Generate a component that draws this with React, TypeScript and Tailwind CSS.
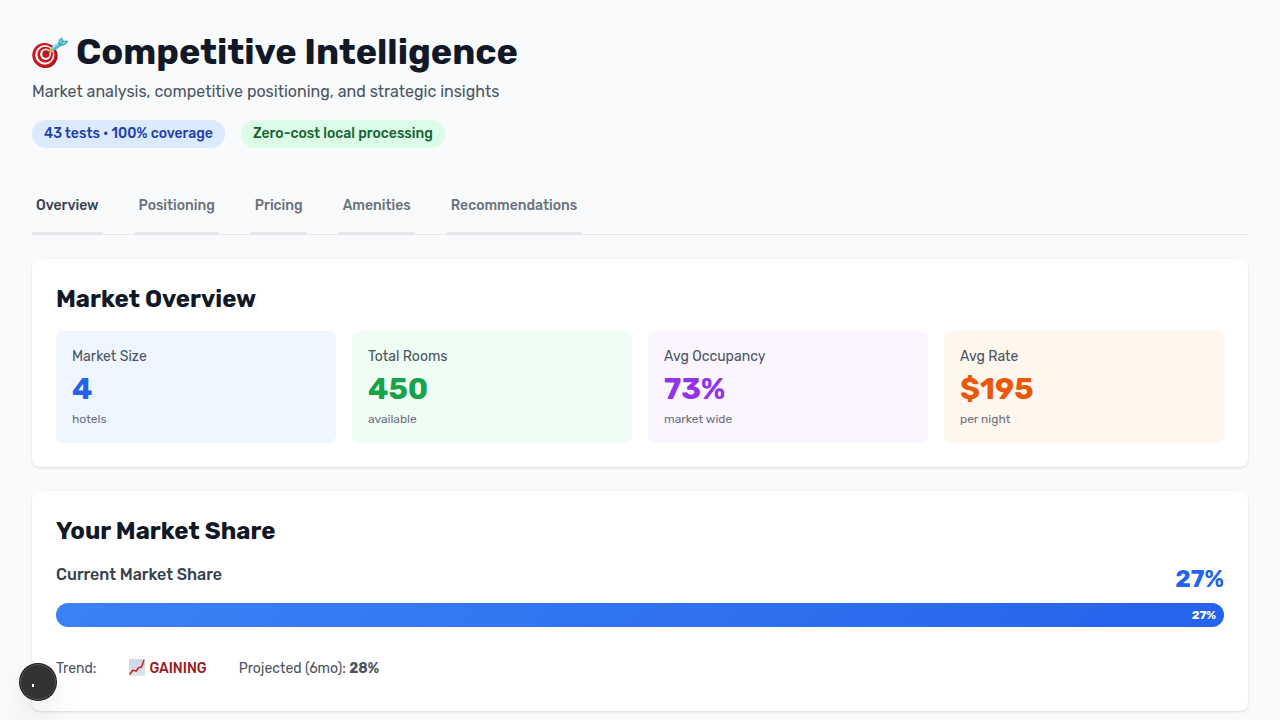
import { useState } from "react";

const tabs = ["Overview", "Positioning", "Pricing", "Amenities", "Recommendations"];

const stats = [
  { label: "Market Size", value: "4", note: "hotels", box: "bg-[#eff6ff]", color: "text-[#2563eb]" },
  { label: "Total Rooms", value: "450", note: "available", box: "bg-[#f0fdf4]", color: "text-[#16a34a]" },
  { label: "Avg Occupancy", value: "73%", note: "market wide", box: "bg-[#faf5ff]", color: "text-[#9333ea]" },
  { label: "Avg Rate", value: "$195", note: "per night", box: "bg-[#fff7ed]", color: "text-[#ea580c]" },
];

function TargetIcon() {
  return (
    <svg viewBox="0 0 36 34" className="h-[34px] w-9 shrink-0" aria-hidden="true">
      <ellipse cx="13.4" cy="20.8" rx="12.2" ry="12.2" fill="#8e1018" />
      <ellipse cx="12.3" cy="20.2" rx="12" ry="12.2" fill="#cf1620" />
      <ellipse cx="12.8" cy="19.9" rx="9.6" ry="9.8" fill="#f6f1f0" />
      <ellipse cx="13.2" cy="19.6" rx="7.7" ry="7.9" fill="#c9151e" />
      <ellipse cx="13.6" cy="19.3" rx="5.5" ry="5.7" fill="#f6f1f0" />
      <ellipse cx="13.9" cy="19.1" rx="3.6" ry="3.8" fill="#c9151e" />
      <path d="M14 19 19 15.6" stroke="#7a3a26" strokeWidth="1.2" />
      <path d="M17.4 14.6 19.4 12.8 21.7 15.6 19.4 17.6 17.8 17.2Z" fill="#e8b72a" />
      <path d="M19 13 21.4 10.8 27 7.6 29.6 10.6 24.4 14.6 21.3 16Z" fill="#4fb9c6" />
      <path d="M19 13 21.4 10.8 27 7.6 28.2 8.8 20 14.2Z" fill="#8be0e8" />
      <path d="M26.2 8.8 27 4.4 29.8 2.4 31.6 5.8 36 5.6 35.4 8 31.6 10.6 28.4 10.8Z" fill="#3aa6b6" />
      <path d="M27 7.6 27.8 4.8 29.4 3.4 30.8 6.4 28.6 8.4Z" fill="#68cdd7" />
      <path d="M29.2 9 31.8 6.9 35 6.6 31.6 9.2Z" fill="#83dce4" />
    </svg>
  );
}

function ChartIcon() {
  return (
    <svg viewBox="0 0 17 20" className="h-5 w-[17px] shrink-0" aria-hidden="true">
      <defs>
        <linearGradient id="chart-paper" x1="0" y1="0" x2="0" y2="1">
          <stop offset="0" stopColor="#ced9e2" />
          <stop offset="1" stopColor="#e0e8ee" />
        </linearGradient>
      </defs>
      <rect x="1" width="16" height="17" fill="url(#chart-paper)" />
      <path d="M5 0V17M9 0V17M13 0V17M1 4H17M1 8.5H17M1 13H17" fill="none" stroke="#c8d4dd" strokeWidth="0.4" />
      <path d="M2.2 15 4.6 11.2 8.4 12 10.8 8.4 13.6 8 15.8 1.6" fill="none" stroke="#c8202b" strokeWidth="1.5" strokeLinejoin="round" strokeLinecap="round" />
    </svg>
  );
}

export default function App() {
  const [active, setActive] = useState("Overview");

  return (
    <div className="min-h-screen bg-[#f9fafb] p-8 font-['Rubik','Roboto',sans-serif] text-[#111827] antialiased">
      <header className="mb-8">
        <h1 className="flex items-center gap-2 text-4xl font-bold">
          <TargetIcon />
          Competitive Intelligence
        </h1>
        <p className="mt-2 text-base text-[#4b5563]">
          Market analysis, competitive positioning, and strategic insights
        </p>
        <div className="mt-4 flex gap-4 text-sm font-medium">
          <span className="rounded-full bg-[#dbeafe] px-3 py-1 text-[#1e40af]">43 tests • 100% coverage</span>
          <span className="rounded-full bg-[#dcfce7] px-3 py-1 text-[#166534]">Zero-cost local processing</span>
        </div>
      </header>

      <nav className="mb-6 flex gap-8 border-b border-[#e5e7eb]" aria-label="Sections">
        {tabs.map((tab) => (
          <button
            key={tab}
            type="button"
            onClick={() => setActive(tab)}
            aria-pressed={active === tab}
            className={
              active === tab
                ? "border-b-2 border-[#e5e7eb] px-1 py-4 text-sm font-medium text-[#374151]"
                : "border-b-2 border-[#e5e7eb] px-1 py-4 text-sm font-medium text-[#6b7280]"
            }
          >
            {tab}
          </button>
        ))}
      </nav>

      <main className="flex flex-col gap-6">
        <section className="rounded-lg bg-white p-6 shadow-sm">
          <h2 className="mb-4 text-2xl font-bold">Market Overview</h2>
          <div className="grid grid-cols-4 gap-4">
            {stats.map((s) => (
              <div key={s.label} className={`flex flex-col gap-1 rounded-lg p-4 ${s.box}`}>
                <p className="text-sm text-[#4b5563]">{s.label}</p>
                <p className={`text-3xl font-bold ${s.color}`}>{s.value}</p>
                <p className="text-xs text-[#6b7280]">{s.note}</p>
              </div>
            ))}
          </div>
        </section>

        <section className="rounded-lg bg-white p-6 shadow-sm">
          <h2 className="mb-4 text-2xl font-bold">Your Market Share</h2>
          <div className="mb-2 flex items-start justify-between">
            <span className="font-medium text-[#374151]">Current Market Share</span>
            <span className="text-2xl font-bold text-[#2563eb]">27%</span>
          </div>
          <div className="flex h-6 items-center justify-end rounded-full bg-[linear-gradient(135deg,#3b82f6,#2563eb)] pr-2">
            <span className="text-xs font-bold text-white">27%</span>
          </div>
          <div className="mt-8 mb-2 flex gap-8 text-sm text-[#4b5563]">
            <span>Trend:</span>
            <span className="flex items-center gap-1 font-medium text-[#991b1b]">
              <ChartIcon />
              GAINING
            </span>
            <span>
              Projected (6mo): <strong className="font-bold">28%</strong>
            </span>
          </div>
        </section>
      </main>

      <button
        type="button"
        aria-label="Open developer tools"
        className="fixed bottom-5 left-5 flex size-9 items-center rounded-full border border-[#555] bg-[#333] pl-[11px] shadow-[0_0_0_1px_#171717,0_16px_32px_-8px_rgba(0,0,0,0.24)]"
      >
        <svg viewBox="0 0 4 12" className="h-3 w-1" aria-hidden="true">
          <rect x="0" y="8" width="2" height="3" fill="#fff" />
        </svg>
      </button>
    </div>
  );
}
